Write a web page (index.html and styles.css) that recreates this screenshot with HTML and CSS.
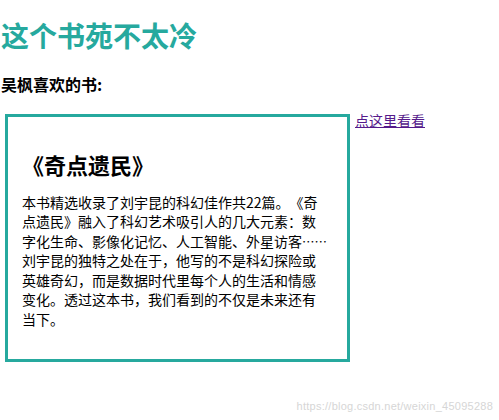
FILE: index.html
```html
<!DOCTYPE html>
<html lang="zh">
<head>
<meta charset="utf-8">
<title>这个书苑不太冷</title>
<link rel="stylesheet" href="styles.css">
</head>
<body>
<h1 class="title">这个书苑不太冷</h1>
<h3 class="subtitle">吴枫喜欢的书:</h3>
<div class="row">
  <div class="book">
    <h2 class="book-title">《奇点遗民》</h2>
    <p class="book-desc">本书精选收录了刘宇昆的科幻佳作共22篇。《奇点遗民》融入了科幻艺术吸引人的几大元素：数字化生命、影像化记忆、人工智能、外星访客<span class="ellipsis">……</span>刘宇昆的独特之处在于，他写的不是科幻探险或英雄奇幻，而是数据时代里每个人的生活和情感变化。透过这本书，我们看到的不仅是未来还有当下。</p>
  </div>
  <a class="more" href="#">点这里看看</a>
</div>
<div class="watermark">https://blog.csdn.net/weixin_45095288</div>
</body>
</html>
```
FILE: styles.css
```css
html, body {
  margin: 0;
  padding: 0;
  background: #fff;
}
body {
  font-family: "Noto Sans CJK SC", "Noto Sans", sans-serif;
  color: #000;
  padding-left: 1px;
  height: 420px;
  position: relative;
  overflow: hidden;
  text-spacing-trim: space-all;
}
.title {
  font-size: 28px;
  font-weight: bold;
  line-height: 1.2;
  color: #26a99e;
  margin: 19px 0 0 0;
}
.subtitle {
  font-size: 16px;
  font-weight: bold;
  line-height: 1.45;
  margin: 20px 0 18px 0;
}
.row {
  display: flex;
  align-items: flex-start;
  gap: 5px;
  margin-left: 4px;
}
.book {
  width: 306px;
  padding: 14px 19px 16px 14px;
  border: 3px solid #26a99e;
}
.book-title {
  font-size: 22px;
  font-weight: bold;
  line-height: 1.45;
  margin: 18px 0 12px 0;
}
.book-desc {
  font-size: 14px;
  line-height: 19.5px;
  margin: 0 0 14px 0;
}
.ellipsis {
  font-size: 12.5px;
}
.more {
  font-size: 14px;
  line-height: 20px;
  color: #551a8b;
  margin-top: -4px;
}
.watermark {
  position: absolute;
  right: 6px;
  bottom: 8px;
  font-family: "Liberation Sans", Arial, sans-serif;
  font-size: 11px;
  color: #d6d6d6;
  letter-spacing: 0.25px;
}
```
